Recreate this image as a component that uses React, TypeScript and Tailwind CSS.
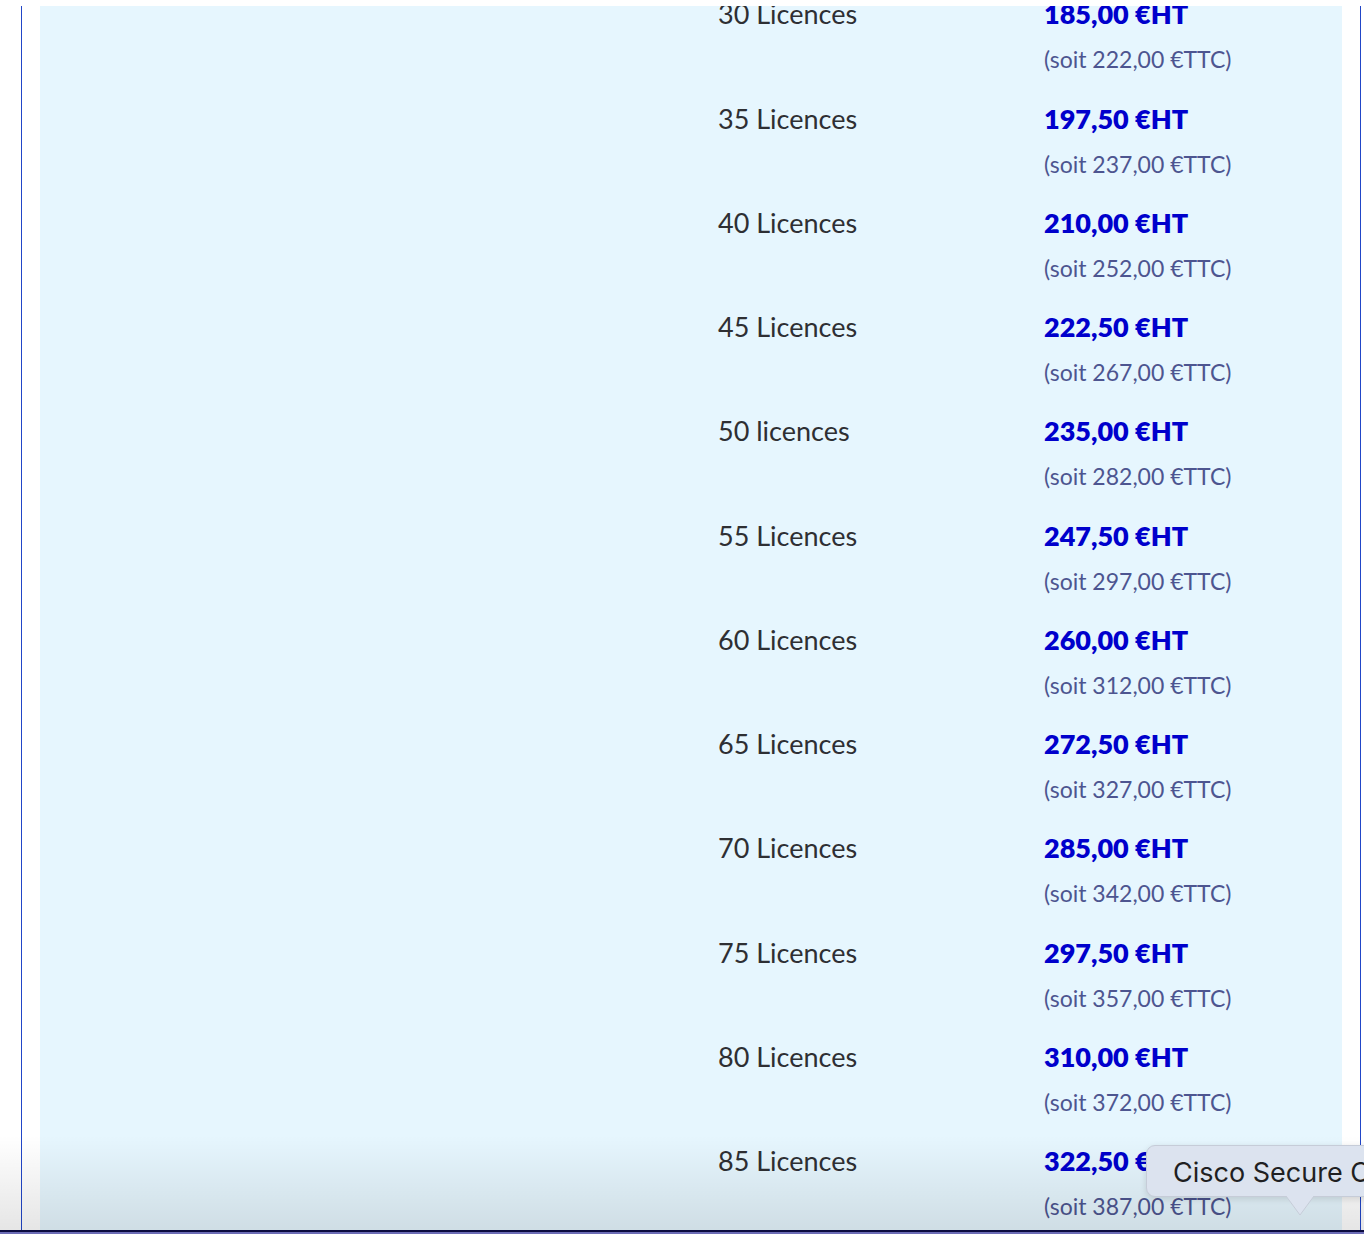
import React from "react";

const rows: [string, string, string][] = [
  ["30 Licences", "185,00 €HT", "(soit 222,00 €TTC)"],
  ["35 Licences", "197,50 €HT", "(soit 237,00 €TTC)"],
  ["40 Licences", "210,00 €HT", "(soit 252,00 €TTC)"],
  ["45 Licences", "222,50 €HT", "(soit 267,00 €TTC)"],
  ["50 licences", "235,00 €HT", "(soit 282,00 €TTC)"],
  ["55 Licences", "247,50 €HT", "(soit 297,00 €TTC)"],
  ["60 Licences", "260,00 €HT", "(soit 312,00 €TTC)"],
  ["65 Licences", "272,50 €HT", "(soit 327,00 €TTC)"],
  ["70 Licences", "285,00 €HT", "(soit 342,00 €TTC)"],
  ["75 Licences", "297,50 €HT", "(soit 357,00 €TTC)"],
  ["80 Licences", "310,00 €HT", "(soit 372,00 €TTC)"],
  ["85 Licences", "322,50 €HT", "(soit 387,00 €TTC)"],
];

export default function App() {
  return (
    <div
      className="relative w-[1364px] h-[1234px] overflow-hidden bg-white"
      style={{ fontFamily: "Lato, 'Liberation Sans', sans-serif" }}
    >
      <div className="flex flex-col h-full">
        <div className="h-[6px] shrink-0 bg-white" />
        <div className="flex flex-1 min-h-0">
          <div className="w-[21px] shrink-0 bg-white" />
          <div className="w-px shrink-0 bg-[#2146c8]" />
          <div className="w-[18px] shrink-0 bg-white" />
          <div className="flex-1 bg-[#e6f6fe] overflow-hidden">
            <div className="mt-[-11.7px] pl-[678px]">
              {rows.map(([lic, ht, ttc]) => (
                <div key={lic} className="flex h-[104.27px]">
                  <div className="w-[326px] shrink-0 text-[27px] leading-[40px] text-[#2e2f33]">
                    {lic}
                  </div>
                  <div className="flex flex-col">
                    <div className="text-[27px] leading-[40px] font-extrabold text-[#0000cc]">
                      {ht}
                    </div>
                    <div className="text-[23px] leading-[50px] text-[#4d5590]">
                      {ttc}
                    </div>
                  </div>
                </div>
              ))}
            </div>
          </div>
          <div className="w-[18px] shrink-0 bg-white" />
          <div className="w-px shrink-0 bg-[#2146c8]" />
          <div className="w-[3px] shrink-0 bg-white" />
        </div>
        <div className="h-[2px] shrink-0 bg-[#0b0b3f]" />
        <div className="h-[2px] shrink-0 bg-[#6c6cb6]" />
      </div>

      {/* bottom fade */}
      <div className="pointer-events-none absolute left-0 right-0 top-[1135px] h-[95px] bg-gradient-to-b from-black/0 to-black/10" />

      {/* tooltip */}
      <div className="absolute left-[1146px] top-[1145px] w-[320px]">
        <div
          className="h-[52px] rounded-[9px] border border-[#c6ccd8] bg-[#dce3ef] pl-[26px] text-[27px] leading-[54px] text-[#1f1f22] whitespace-nowrap shadow-[0_2px_6px_rgba(0,0,0,0.12)]"
          style={{ fontFamily: "Inter, 'Liberation Sans', sans-serif" }}
        >
          Cisco Secure Client
        </div>
        <svg
          className="absolute left-[140px] top-[50px]"
          width="28"
          height="22"
          viewBox="0 0 28 22"
        >
          <path d="M0 1 L14 20 L28 1" fill="#dce3ef" stroke="#c6ccd8" strokeWidth="1" />
          <rect x="1" y="0" width="26" height="1.5" fill="#dce3ef" />
        </svg>
      </div>
    </div>
  );
}
